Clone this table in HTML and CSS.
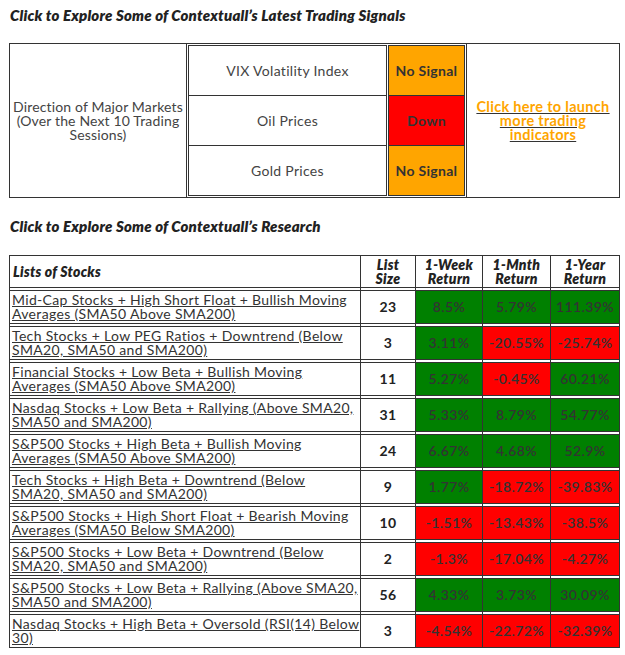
FILE: index.html
```html
<!DOCTYPE html>
<html>
<head>
<meta charset="utf-8">
<link rel="stylesheet" href="styles.css">
</head>
<body>
<h2 class="title first">Click to Explore Some of Contextuall’s Latest Trading Signals</h2>
<div class="signals">
  <div class="dir">Direction of Major Markets (Over the Next 10 Trading Sessions)</div>
  <div class="labels">
    <div class="lrow">VIX Volatility Index</div>
    <div class="lrow">Oil Prices</div>
    <div class="lrow">Gold Prices</div>
  </div>
  <div class="sigs">
    <div class="srow nosig">No Signal</div>
    <div class="srow down">Down</div>
    <div class="srow nosig">No Signal</div>
  </div>
  <div class="launch"><a href="#">Click here to launch more trading indicators</a></div>
</div>

<h2 class="title second">Click to Explore Some of Contextuall’s Research</h2>
<table class="stocks">
  <colgroup><col class="c1"><col class="c2"><col class="c3"><col class="c4"><col class="c5"></colgroup>
  <tr class="head"><th class="name">Lists of Stocks</th><th>List Size</th><th>1-Week Return</th><th>1-Mnth Return</th><th>1-Year Return</th></tr>
  <tr class="sp"><td></td><td></td><td></td><td></td><td></td></tr>
  <tr><td class="name"><a href="#">Mid-Cap Stocks + High Short Float + Bullish Moving Averages (SMA50 Above SMA200)</a></td><td class="n">23</td><td class="g">8.5%</td><td class="g">5.79%</td><td class="g">111.39%</td></tr>
  <tr class="sp"><td></td><td></td><td></td><td></td><td></td></tr>
  <tr><td class="name"><a href="#">Tech Stocks + Low PEG Ratios + Downtrend (Below SMA20, SMA50 and SMA200)</a></td><td class="n">3</td><td class="g">3.11%</td><td class="r">-20.55%</td><td class="r">-25.74%</td></tr>
  <tr class="sp"><td></td><td></td><td></td><td></td><td></td></tr>
  <tr><td class="name"><a href="#">Financial Stocks + Low Beta + Bullish Moving Averages (SMA50 Above SMA200)</a></td><td class="n">11</td><td class="g">5.27%</td><td class="r">-0.45%</td><td class="g">60.21%</td></tr>
  <tr class="sp"><td></td><td></td><td></td><td></td><td></td></tr>
  <tr><td class="name"><a href="#">Nasdaq Stocks + Low Beta + Rallying (Above SMA20, SMA50 and SMA200)</a></td><td class="n">31</td><td class="g">5.33%</td><td class="g">8.79%</td><td class="g">54.77%</td></tr>
  <tr class="sp"><td></td><td></td><td></td><td></td><td></td></tr>
  <tr><td class="name"><a href="#">S&amp;P500 Stocks + High Beta + Bullish Moving Averages (SMA50 Above SMA200)</a></td><td class="n">24</td><td class="g">6.67%</td><td class="g">4.68%</td><td class="g">52.9%</td></tr>
  <tr class="sp"><td></td><td></td><td></td><td></td><td></td></tr>
  <tr><td class="name"><a href="#">Tech Stocks + High Beta + Downtrend (Below SMA20, SMA50 and SMA200)</a></td><td class="n">9</td><td class="g">1.77%</td><td class="r">-18.72%</td><td class="r">-39.83%</td></tr>
  <tr class="sp"><td></td><td></td><td></td><td></td><td></td></tr>
  <tr><td class="name"><a href="#">S&amp;P500 Stocks + High Short Float + Bearish Moving Averages (SMA50 Below SMA200)</a></td><td class="n">10</td><td class="r">-1.51%</td><td class="r">-13.43%</td><td class="r">-38.5%</td></tr>
  <tr class="sp"><td></td><td></td><td></td><td></td><td></td></tr>
  <tr><td class="name"><a href="#">S&amp;P500 Stocks + Low Beta + Downtrend (Below SMA20, SMA50 and SMA200)</a></td><td class="n">2</td><td class="r">-1.3%</td><td class="r">-17.04%</td><td class="r">-4.27%</td></tr>
  <tr class="sp"><td></td><td></td><td></td><td></td><td></td></tr>
  <tr><td class="name"><a href="#">S&amp;P500 Stocks + Low Beta + Rallying (Above SMA20, SMA50 and SMA200)</a></td><td class="n">56</td><td class="g">4.33%</td><td class="g">3.73%</td><td class="g">30.09%</td></tr>
  <tr class="sp"><td></td><td></td><td></td><td></td><td></td></tr>
  <tr><td class="name"><a href="#">Nasdaq Stocks + High Beta + Oversold (RSI(14) Below 30)</a></td><td class="n">3</td><td class="r">-4.54%</td><td class="r">-22.72%</td><td class="r">-32.39%</td></tr>
</table>
</body>
</html>
```
FILE: styles.css
```css
html, body {
  margin: 0;
  padding: 0;
  background: #fff;
}
body {
  padding: 0 0 0 9px;
  font-family: Lato, "Open Sans", sans-serif;
  color: #333;
  letter-spacing: 0.3px;
}
.title {
  margin: 0;
  padding-left: 1px;
  font-size: 15px;
  line-height: 18px;
  font-weight: 800;
  font-style: italic;
  color: #222;
  letter-spacing: 0.2px;
}
.title.first {
  padding-top: 6px;
}
.title.second {
  margin-top: 19px;
}
.signals {
  margin-top: 19px;
  box-sizing: border-box;
  width: 611px;
  height: 155px;
  border: 1px solid #333;
  display: flex;
  font-size: 14px;
  line-height: 14px;
}
.dir {
  box-sizing: border-box;
  width: 177px;
  border-right: 1px solid #333;
  display: flex;
  align-items: center;
  justify-content: center;
  text-align: center;
  color: #444;
  padding: 0;
  letter-spacing: 0.15px;
}
.labels, .sigs {
  box-sizing: border-box;
  margin: 1px 1px 1px 1px;
  border: 1px solid #333;
  display: flex;
  flex-direction: column;
}
.labels {
  width: 199px;
}
.sigs {
  width: 77px;
  margin-left: 0;
}
.lrow, .srow {
  flex: 1;
  display: flex;
  align-items: center;
  justify-content: center;
  border-bottom: 1px solid #333;
}
.lrow:last-child, .srow:last-child {
  border-bottom: 0;
}
.lrow {
  color: #444;
}
.srow {
  font-weight: 700;
  color: #333;
}
.nosig { background: #ffa500; }
.down { background: #ff0000; }
.launch {
  box-sizing: border-box;
  width: 153px;
  border-left: 1px solid #333;
  display: flex;
  align-items: center;
  justify-content: center;
  text-align: center;
  padding: 0 6px;
}
.launch a {
  color: #ffa500;
  font-weight: 700;
  font-size: 14.5px;
  text-decoration: underline;
  text-decoration-color: #333;
}
.stocks {
  margin-top: 20px;
  border-collapse: collapse;
  table-layout: fixed;
  width: 610px;
  font-size: 14px;
  line-height: 14px;
}
.c1 { width: 351px; }
.c2 { width: 55px; }
.c3 { width: 67px; }
.c4 { width: 68px; }
.c5 { width: 69px; }
.stocks th, .stocks td {
  border: 1px solid #333;
  padding: 0;
  text-align: center;
}
.stocks th {
  height: 31px;
  font-weight: 800;
  font-style: italic;
  color: #222;
  padding: 0 6px;
}
.stocks td {
  height: 32px;
}
.stocks th.name {
  text-align: left;
  padding-left: 3px;
}
.stocks td.name {
  text-align: left;
  padding-left: 2px;
  padding-right: 0;
  letter-spacing: 0.33px;
}
.stocks td.name a {
  color: #333;
  text-decoration: underline;
}
.stocks tr.sp td {
  height: 2px;
  padding: 0;
}
.stocks td.n {
  font-weight: 700;
  color: #222;
}
.stocks td.g, .stocks td.r {
  font-weight: 600;
  color: #333;
  letter-spacing: 0.4px;
}
.g { background: #008000; }
.r { background: #ff0000; }
```
